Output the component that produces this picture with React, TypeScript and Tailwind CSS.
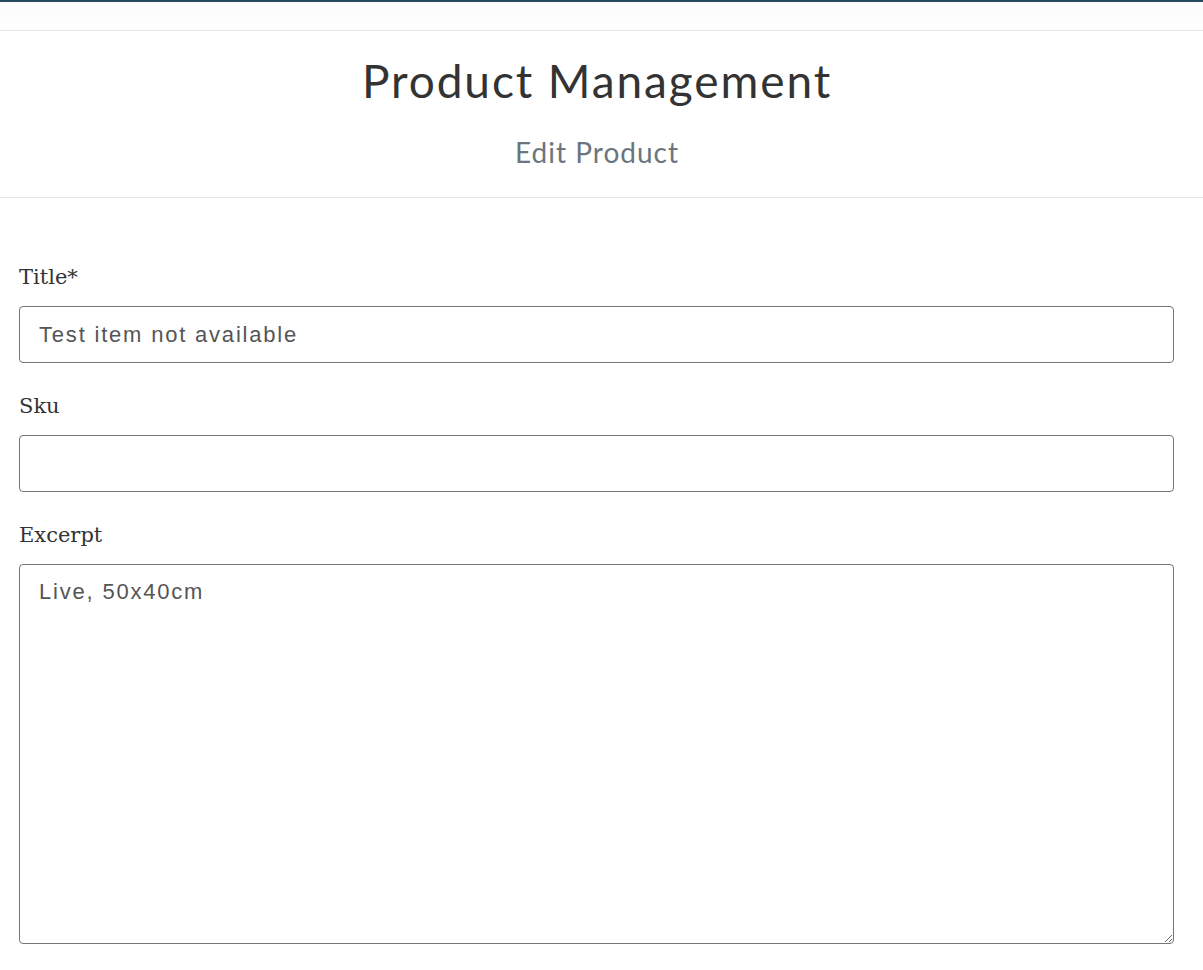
export default function App() {
  return (
    <div className="min-h-screen bg-white">
      <div className="h-[2px] bg-[#284a5f]" />
      <div className="h-[28px] bg-gradient-to-b from-[#fbfbfb] to-white" />
      <header className="border-y border-[#e5e5e5] h-[168px] pr-[9px] flex flex-col items-center">
        <h1 className="mt-[22px] text-[46px] leading-[56px] text-[#333] tracking-[1.9px] font-['Lato',sans-serif]">
          Product Management
        </h1>
        <h2 className="mt-[26px] text-[28px] leading-[34px] text-[#6c757d] tracking-[1px] font-['Lato',sans-serif]">
          Edit Product
        </h2>
      </header>
      <form className="pl-[19px] pr-[29px] pt-[65px] flex flex-col">
        <label className="text-[21px] leading-[28px] text-[#333] font-['DejaVu_Serif','Liberation_Serif',serif]">
          Title*
        </label>
        <input
          defaultValue="Test item not available"
          className="mt-[15px] h-[57px] border border-[#767676] rounded-[4px] px-[19px] text-[22px] tracking-[1.8px] text-[#555] font-['Liberation_Sans',Arial,sans-serif] outline-none"
        />
        <label className="mt-[29px] text-[21px] leading-[28px] text-[#333] font-['DejaVu_Serif','Liberation_Serif',serif]">
          Sku
        </label>
        <input className="mt-[15px] h-[57px] border border-[#767676] rounded-[4px] px-[19px] text-[22px] tracking-[1.8px] text-[#555] font-['Liberation_Sans',Arial,sans-serif] outline-none" />
        <label className="mt-[29px] text-[21px] leading-[28px] text-[#333] font-['DejaVu_Serif','Liberation_Serif',serif]">
          Excerpt
        </label>
        <textarea
          defaultValue="Live, 50x40cm"
          className="mt-[15px] h-[380px] border border-[#767676] rounded-[4px] px-[19px] py-[12px] text-[22px] leading-[30px] tracking-[1.8px] text-[#555] font-['Liberation_Sans',Arial,sans-serif] outline-none"
        />
      </form>
    </div>
  );
}
